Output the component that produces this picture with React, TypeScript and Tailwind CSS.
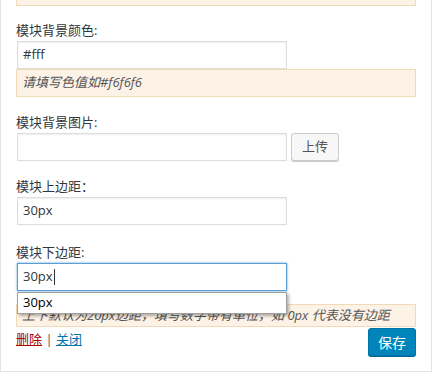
import React from "react";

const font = { fontFamily: '"Segoe UI", "Open Sans", "Noto Sans CJK SC", sans-serif' };

function Label({ children }: { children: React.ReactNode }) {
  return <div className="h-[19px] text-[13px] leading-[19px] text-[#32373c]">{children}</div>;
}

function Input({ value, focus }: { value: string; focus?: boolean }) {
  return (
    <div
      className={
        "m-[1px] flex h-[28px] w-[270px] items-center border px-[5px] text-[13px] text-[#32373c] " +
        (focus
          ? "border-[#5b9dd9] shadow-[0_0_2px_rgba(30,140,190,0.8)]"
          : "border-[#ddd] shadow-[inset_0_1px_2px_rgba(0,0,0,0.07)]")
      }
    >
      {value}
      {focus && <span className="ml-[1px] h-[16px] w-[1px] bg-[#32373c]" />}
    </div>
  );
}

function Notice({ children, className = "" }: { children: React.ReactNode; className?: string }) {
  return (
    <div
      className={
        "border border-[#f2d9b8] bg-[#fcf2e5] px-[5px] text-[13px] italic text-[#555] " + className
      }
    >
      {children}
    </div>
  );
}

export default function App() {
  return (
    <div className="h-[378px] w-[440px] overflow-hidden bg-white" style={font}>
      <div className="w-[432px] border-x border-b border-[#e5e5e5] px-[15px] pb-[15px]">
        <div className="h-[6px] border-x border-b border-[#f2d9b8] bg-[#fcf2e5]" />

        <div className="mt-[15px]">
          <Label>模块背景颜色:</Label>
          <Input value="#fff" />
          <Notice className="-mt-[1px] flex h-[28px] items-center">请填写色值如#f6f6f6</Notice>
        </div>

        <div className="mt-[16px]">
          <Label>模块背景图片:</Label>
          <div className="flex items-center">
            <Input value="" />
            <button className="ml-[3px] h-[28px] w-[48px] rounded-[3px] border border-[#ccc] bg-[#f7f7f7] text-[13px] text-[#555] shadow-[0_1px_0_#ccc]">
              上传
            </button>
          </div>
        </div>

        <div className="mt-[15px]">
          <Label>模块上边距：</Label>
          <Input value="30px" />
        </div>

        <div className="mt-[18px]">
          <Label>模块下边距:</Label>
          <div className="relative">
            <Input value="30px" focus />
            <div className="absolute left-[1px] top-[29px] z-10 flex h-[22px] w-[270px] items-center border border-[#a0a0a0] bg-white px-[5px] text-[13px] text-black shadow-[2px_2px_3px_rgba(0,0,0,0.3)]">
              30px
            </div>
          </div>
          <Notice className="mt-[13px] flex h-[23px] items-center">
            上下默认为20px边距，填写数字带有单位，如 0px 代表没有边距
          </Notice>
        </div>

        <div className="flex items-start justify-between">
          <div className="mt-[3px] text-[13px] leading-[19px] text-[#555]">
            <a className="text-[#a00] underline">删除</a> | <a className="text-[#0073aa] underline">关闭</a>
          </div>
          <button className="mt-[1px] h-[28px] w-[48px] rounded-[3px] border border-[#0073aa] bg-[#0085ba] text-[14px] text-white shadow-[0_1px_0_#006799]">
            保存
          </button>
        </div>
      </div>
    </div>
  );
}
